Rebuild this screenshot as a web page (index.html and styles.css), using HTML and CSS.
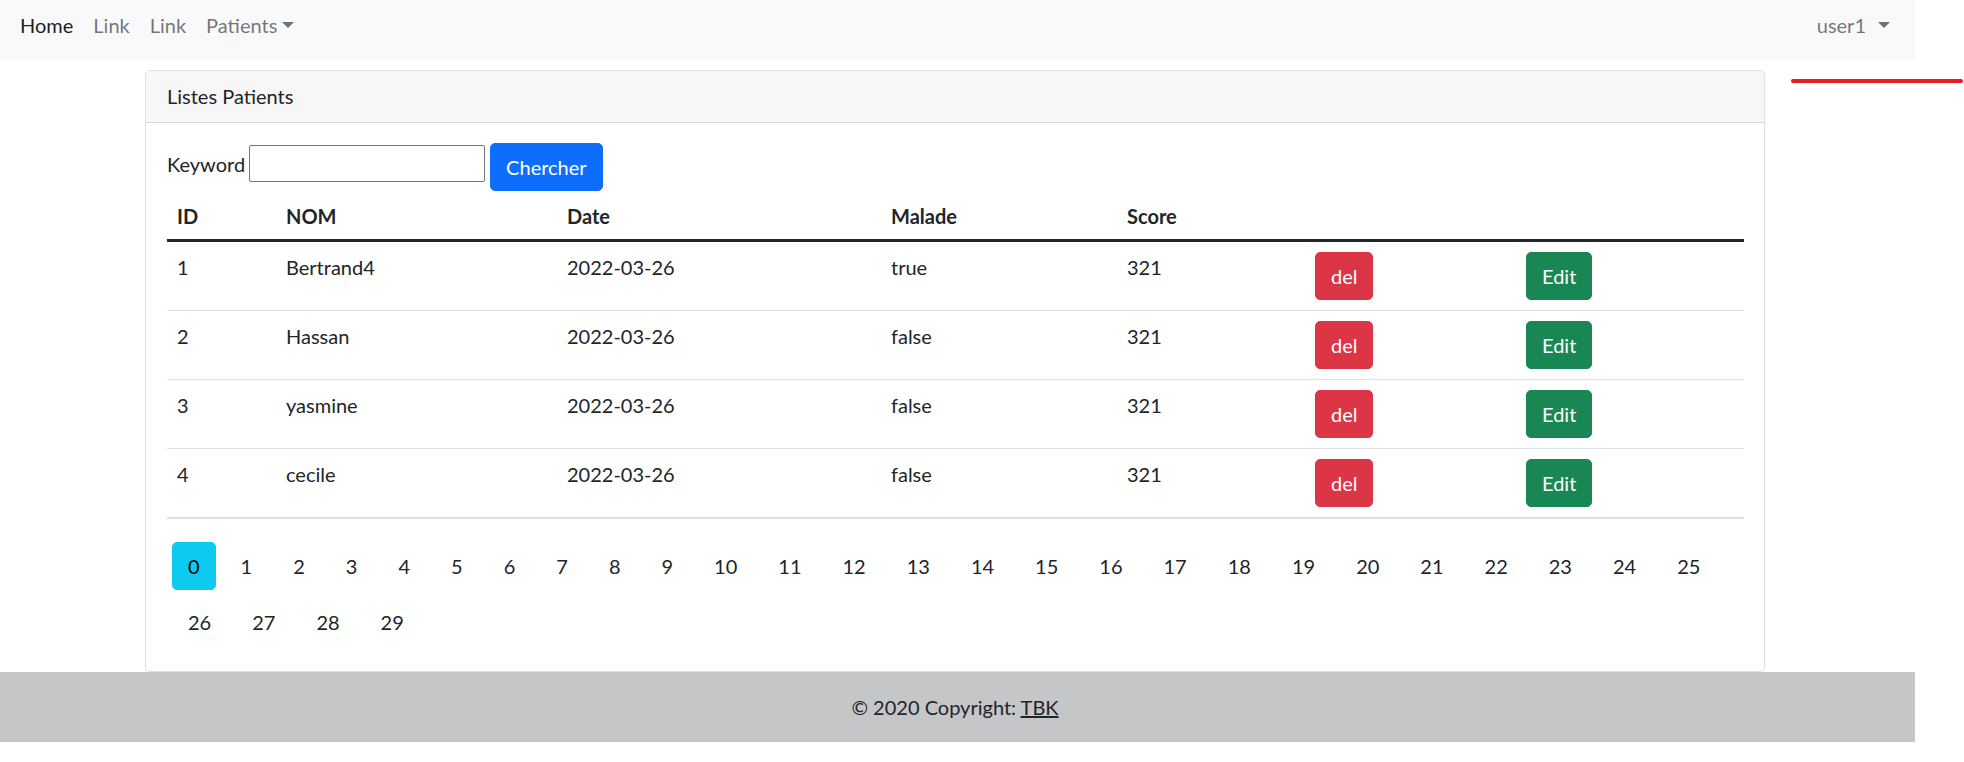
FILE: index.html
```html
<!DOCTYPE html>
<html lang="fr">
<head>
<meta charset="utf-8">
<title>Patients</title>
<link rel="stylesheet" href="styles.css">
</head>
<body>
<div class="page">
  <nav class="navbar">
    <ul class="nav">
      <li><a class="nav-link active" href="#">Home</a></li>
      <li><a class="nav-link" href="#">Link</a></li>
      <li><a class="nav-link" href="#">Link</a></li>
      <li><a class="nav-link dropdown-toggle" href="#">Patients</a></li>
    </ul>
    <ul class="nav">
      <li><a class="nav-link dropdown-toggle dropdown-toggle-wide" href="#">user1</a></li>
    </ul>
  </nav>

  <main class="container">
    <div class="card">
      <div class="card-header">Listes Patients</div>
      <div class="card-body">
        <form class="search">
          <label class="search-label" for="kw">Keyword</label>
          <input class="search-input" id="kw" type="text">
          <button class="btn btn-primary" type="button">Chercher</button>
        </form>
        <table class="table">
          <colgroup>
            <col class="c-id"><col class="c-nom"><col class="c-date"><col class="c-malade"><col class="c-score"><col class="c-del"><col class="c-edit">
          </colgroup>
          <thead>
            <tr><th>ID</th><th>NOM</th><th>Date</th><th>Malade</th><th>Score</th><th></th><th></th></tr>
          </thead>
          <tbody>
            <tr><td>1</td><td>Bertrand4</td><td>2022-03-26</td><td>true</td><td>321</td><td><a class="btn btn-danger" href="#">del</a></td><td><a class="btn btn-success" href="#">Edit</a></td></tr>
            <tr><td>2</td><td>Hassan</td><td>2022-03-26</td><td>false</td><td>321</td><td><a class="btn btn-danger" href="#">del</a></td><td><a class="btn btn-success" href="#">Edit</a></td></tr>
            <tr><td>3</td><td>yasmine</td><td>2022-03-26</td><td>false</td><td>321</td><td><a class="btn btn-danger" href="#">del</a></td><td><a class="btn btn-success" href="#">Edit</a></td></tr>
            <tr><td>4</td><td>cecile</td><td>2022-03-26</td><td>false</td><td>321</td><td><a class="btn btn-danger" href="#">del</a></td><td><a class="btn btn-success" href="#">Edit</a></td></tr>
          </tbody>
        </table>
        <ul class="pages">
          <li><a class="btn btn-info" href="#">0</a></li>
          <li><a class="btn" href="#">1</a></li>
          <li><a class="btn" href="#">2</a></li>
          <li><a class="btn" href="#">3</a></li>
          <li><a class="btn" href="#">4</a></li>
          <li><a class="btn" href="#">5</a></li>
          <li><a class="btn" href="#">6</a></li>
          <li><a class="btn" href="#">7</a></li>
          <li><a class="btn" href="#">8</a></li>
          <li><a class="btn" href="#">9</a></li>
          <li><a class="btn" href="#">10</a></li>
          <li><a class="btn" href="#">11</a></li>
          <li><a class="btn" href="#">12</a></li>
          <li><a class="btn" href="#">13</a></li>
          <li><a class="btn" href="#">14</a></li>
          <li><a class="btn" href="#">15</a></li>
          <li><a class="btn" href="#">16</a></li>
          <li><a class="btn" href="#">17</a></li>
          <li><a class="btn" href="#">18</a></li>
          <li><a class="btn" href="#">19</a></li>
          <li><a class="btn" href="#">20</a></li>
          <li><a class="btn" href="#">21</a></li>
          <li><a class="btn" href="#">22</a></li>
          <li><a class="btn" href="#">23</a></li>
          <li><a class="btn" href="#">24</a></li>
          <li><a class="btn" href="#">25</a></li>
          <li><a class="btn" href="#">26</a></li>
          <li><a class="btn" href="#">27</a></li>
          <li><a class="btn" href="#">28</a></li>
          <li><a class="btn" href="#">29</a></li>
        </ul>
      </div>
    </div>
  </main>

  <footer class="footer">© 2020 Copyright: <a class="footer-link" href="#">TBK</a></footer>
</div>
<span class="annotation"></span>
</body>
</html>
```
FILE: styles.css
```css
* { box-sizing: border-box; }

html, body {
  margin: 0;
  padding: 0;
  background: #fff;
}

body {
  font-family: "Lato", "Open Sans", sans-serif;
  font-size: 20px;
  line-height: 30px;
  color: #212529;
  position: relative;
}

.page {
  width: 1915px;
}

/* navbar */
.navbar {
  height: 60px;
  background: #f8f9fa;
  display: flex;
  justify-content: space-between;
  align-items: flex-start;
  padding: 10px 15px 0 10px;
}

.nav {
  list-style: none;
  margin: 0;
  padding: 0;
  display: flex;
}

.nav-link {
  display: block;
  padding: 0 10px;
  color: rgba(0, 0, 0, 0.55);
  text-decoration: none;
}

.nav-link.active {
  color: rgba(0, 0, 0, 0.9);
}

.dropdown-toggle::after {
  content: "";
  display: inline-block;
  margin-left: 5px;
  vertical-align: 5px;
  border-top: 6px solid;
  border-left: 6px solid transparent;
  border-right: 6px solid transparent;
}

.dropdown-toggle-wide::after {
  margin-left: 12px;
}

/* card */
.container {
  width: 1620px;
  margin: 10px 0 0 145px;
}

.card {
  border: 1px solid rgba(0, 0, 0, 0.125);
  border-radius: 5px;
  background: #fff;
}

.card-header {
  background: rgba(0, 0, 0, 0.03);
  border-bottom: 1px solid rgba(0, 0, 0, 0.125);
  padding: 10px 20px 11px 21px;
  border-radius: 5px 5px 0 0;
}

.card-body {
  padding: 20px 20px 20px 21px;
}

/* search form */
.search {
  display: flex;
  align-items: flex-start;
  margin: 0;
}

.search-label {
  margin-top: 6px;
  margin-right: 4px;
}

.search-input {
  margin-top: 2px;
  width: 236px;
  height: 37px;
  border: 1px solid #767676;
  border-radius: 2px;
  font: inherit;
  font-size: 16px;
  padding: 1px 4px;
}

.search .btn {
  margin-left: 5px;
}

/* buttons */
.btn {
  display: inline-block;
  padding: 8px 15px;
  border: 1px solid transparent;
  border-radius: 5px;
  font: inherit;
  line-height: 30px;
  color: #212529;
  text-decoration: none;
  background: transparent;
  cursor: pointer;
}

.btn-primary { background: #0d6efd; border-color: #0d6efd; color: #fff; }
.btn-danger  { background: #dc3545; border-color: #dc3545; color: #fff; }
.btn-success { background: #198754; border-color: #198754; color: #fff; }
.btn-info    { background: #0dcaf0; border-color: #0dcaf0; color: #000; }

/* table */
.table {
  width: 1577px;
  border-collapse: collapse;
  table-layout: fixed;
  margin-bottom: 20px;
}

.c-id { width: 109px; }
.c-nom { width: 281px; }
.c-date { width: 324px; }
.c-malade { width: 236px; }
.c-score { width: 188px; }
.c-del { width: 211px; }
.c-edit { width: 228px; }

.table th {
  text-align: left;
  font-weight: 700;
  padding: 10px 10px 8px;
  border-bottom: 3px solid #212529;
}

.table td {
  padding: 10px;
  vertical-align: top;
  border-bottom: 1px solid #dee2e6;
}

.table tbody tr:last-child td {
  border-bottom: 2px solid #dcdfe2;
}

/* pagination */
.pages {
  list-style: none;
  margin: 0;
  padding: 3px 0 5px 5px;
  display: flex;
  flex-wrap: wrap;
  column-gap: 9px;
  row-gap: 8px;
}

/* footer */
.footer {
  background: #c5c6c8;
  padding: 20px 5px 20px 0;
  text-align: center;
}

.footer-link {
  color: #212529;
  text-decoration: underline;
}

/* annotation stroke drawn over the screenshot */
.annotation {
  position: absolute;
  top: 79px;
  left: 1791px;
  width: 172px;
  height: 4px;
  border-radius: 2px;
  background: #e81c24;
}
```
